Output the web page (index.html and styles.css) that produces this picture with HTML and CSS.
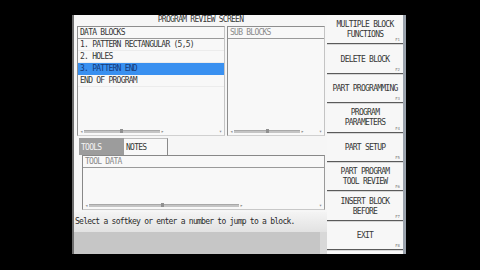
FILE: index.html
```html
<!DOCTYPE html>
<html>
<head>
<meta charset="utf-8">
<link rel="stylesheet" href="styles.css">
</head>
<body>
<div class="screen">
  <div class="main">
    <div class="title">PROGRAM REVIEW SCREEN</div>
    <div class="panels">
      <div class="panel data">
        <div class="phead">DATA BLOCKS</div>
        <div class="rows">
          <div class="row">1. PATTERN RECTANGULAR (5,5)</div>
          <div class="row">2. HOLES</div>
          <div class="row sel">3. PATTERN END</div>
          <div class="row">END OF PROGRAM</div>
        </div>
        <div class="hscroll">
          <span class="arr">◂</span>
          <div class="track t1"><span class="thumb"></span></div>
          <span class="arr">▸</span>
          <span class="fill"></span>
          <span class="arr">▾</span>
        </div>
      </div>
      <div class="panel sub">
        <div class="phead dim">SUB BLOCKS</div>
        <div class="rows"></div>
        <div class="hscroll">
          <span class="arr">◂</span>
          <div class="track t2"><span class="thumb"></span></div>
          <span class="arr">▸</span>
          <span class="fill"></span>
          <span class="arr">▾</span>
        </div>
      </div>
    </div>
    <div class="tabs">
      <div class="tab on">TOOLS</div>
      <div class="tab">NOTES</div>
    </div>
    <div class="tabpanel">
      <div class="phead dim">TOOL DATA</div>
      <div class="rows"></div>
      <div class="hscroll">
        <span class="arr">◂</span>
        <div class="track t3"><span class="thumb"></span></div>
        <span class="arr">▸</span>
        <span class="fill"></span>
        <span class="arr">▾</span>
      </div>
    </div>
    <div class="status">Select a softkey or enter a number to jump to a block.</div>
    <div class="cmdline"><span class="cmdend"></span></div>
  </div>
  <div class="keys">
    <div class="key"><span>MULTIPLE BLOCK<br>FUNCTIONS</span><i>F1</i></div>
    <div class="key"><span>DELETE BLOCK</span><i>F2</i></div>
    <div class="key"><span>PART PROGRAMMING</span><i>F3</i></div>
    <div class="key"><span>PROGRAM<br>PARAMETERS</span><i>F4</i></div>
    <div class="key"><span>PART SETUP</span><i>F5</i></div>
    <div class="key"><span>PART PROGRAM<br>TOOL REVIEW</span><i>F6</i></div>
    <div class="key"><span>INSERT BLOCK<br>BEFORE</span><i>F7</i></div>
    <div class="key"><span>EXIT</span><i>F8</i></div>
  </div>
  <div class="edge"></div>
</div>
</body>
</html>
```

FILE: styles.css
```css
* { box-sizing: border-box; }
html, body { margin: 0; padding: 0; background: #000; }
body {
  width: 480px; height: 270px; overflow: hidden;
  font-family: "DejaVu Sans Mono", "Liberation Mono", monospace;
  font-size: 8px; letter-spacing: -0.75px; color: #363636;
}
.screen {
  margin: 15px 0 0 72px;
  width: 334px; height: 239px;
  display: flex;
  background: #f6f6f6;
  border-left: 2px solid #6c6c6c;
}
.main { width: 253px; display: flex; flex-direction: column; }
.title { height: 11px; line-height: 10px; text-align: center; }
.panels { height: 110px; display: flex; gap: 2px; padding-left: 3px; }
.panel {
  display: flex; flex-direction: column;
  border: 1px solid #8e8e8e; border-right-color: #c4c4c4; border-bottom-color: #d0d0d0;
  background: #f8f8f8;
}
.data { width: 148px; }
.sub { width: 98px; }
.phead {
  height: 12px; line-height: 12px; padding-left: 2px;
  border-bottom: 1px solid #9a9a9a;
  white-space: nowrap;
}
.dim { color: #8a8a8a; }
.rows { flex: 1; }
.row {
  height: 12px; line-height: 12px; padding-left: 2px; white-space: nowrap;
  border-bottom: 1px solid #ececec;
}
.row.sel { background: #3990f0; color: #163a78; border-bottom-color: #3990f0; }
.hscroll {
  height: 8px; display: flex; align-items: center; gap: 1px;
  padding: 0 2px; font-size: 5px; color: #8a8a8a; letter-spacing: 0;
}
.track { height: 3px; background: #c4c4c4; border-top: 1px solid #a8a8a8; position: relative; }
.t1 { width: 76px; }
.t2 { width: 66px; }
.t3 { width: 150px; }
.thumb { position: absolute; left: 48%; top: -2px; width: 3px; height: 4px; background: #909090; }
.fill { flex: 1; }
.arr { line-height: 5px; }
.tabs { margin-top: 2px; height: 17px; display: flex; padding-left: 5px; }
.tab {
  width: 44px; line-height: 17px; padding-left: 2px;
  border-top: 1px solid #bdbdbd; border-right: 1px solid #8a8a8a;
  background: #f8f8f8;
}
.tab.on { width: 45px; background: #9c9c9c; color: #f4f4f4; border-right: none; border-top-color: #9c9c9c; }
.tabpanel {
  margin-left: 8px; width: 243px; height: 55px;
  display: flex; flex-direction: column;
  border: 1px solid #888; border-right-color: #9a9a9a; border-bottom-color: #c8c8c8;
  background: #f8f8f8;
}
.status {
  margin-top: 2px; height: 20px; line-height: 20px; padding-left: 1px;
  white-space: nowrap; color: #2a2a2a;
  background: linear-gradient(#f4f4f4, #e2e2e2);
}
.cmdline { flex: 1; background: #c6c6c6; display: flex; justify-content: flex-end; }
.cmdend { width: 7px; background: #d8d8d8; }
.keys { width: 76px; display: flex; flex-direction: column; background: #f7f7f7; }
.key {
  height: 29.4px; flex: 0 0 29.4px; position: relative;
  display: flex; align-items: center; justify-content: center;
  text-align: center; line-height: 10px; padding-top: 2px;
  border-bottom: 1px solid #5a5a5a;
  box-shadow: 0 1px 0 #d6d6d6;
  color: #363636;
}
.key i {
  position: absolute; right: 3px; bottom: 1px;
  font-style: normal; font-size: 4px; letter-spacing: 0; color: #777; line-height: 4px;
}
.edge { width: 3px; background: #9aa2ac; }
```
